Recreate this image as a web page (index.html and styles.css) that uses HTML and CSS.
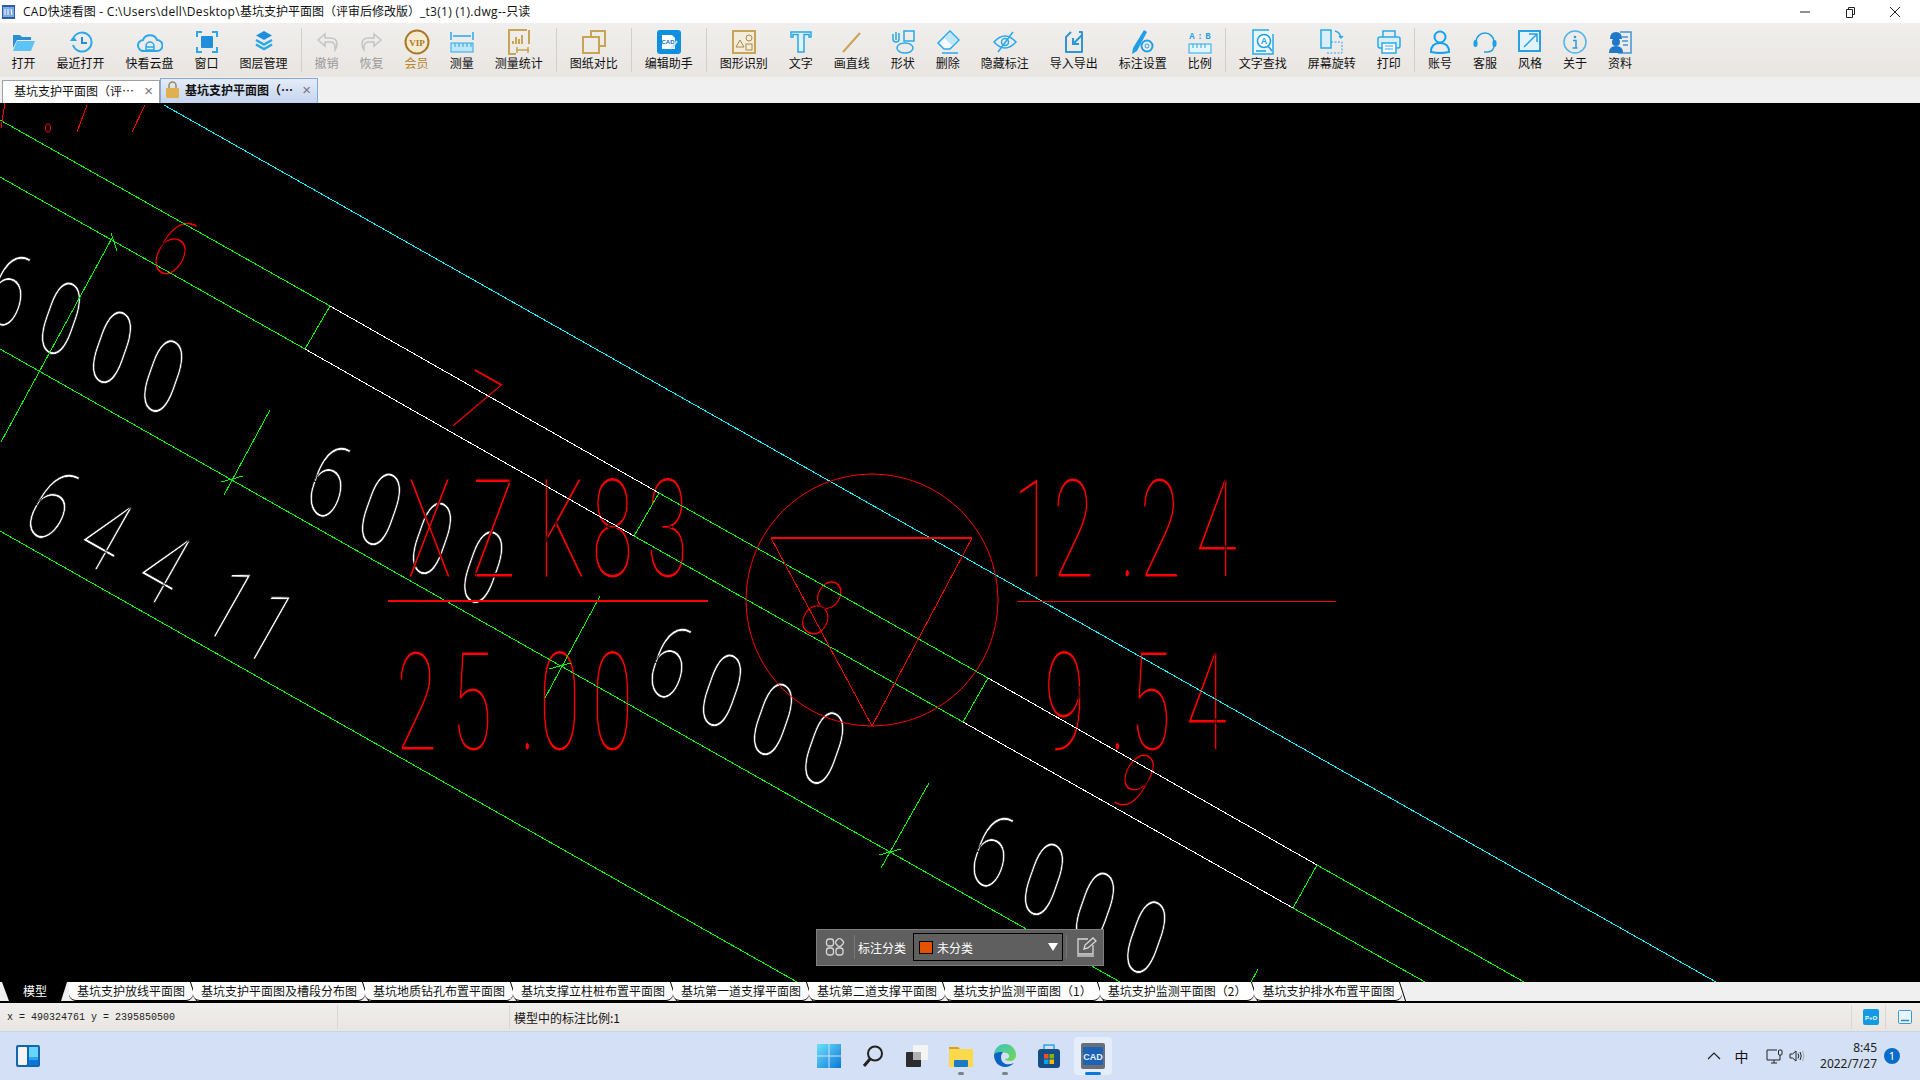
FILE: index.html
```html
<!DOCTYPE html>
<html lang="zh-CN">
<head>
<meta charset="utf-8">
<title>CAD快速看图</title>
<link rel="stylesheet" href="styles.css">
</head>
<body>
<div class="app">
  <header class="titlebar">
    <svg class="app-ico" width="13" height="14" viewBox="0 0 13 14"><rect width="13" height="14" fill="#2a5caa"/><rect x="1" y="2" width="11" height="10" fill="#7fa8dc"/><path d="M3 4v6M6 4v6M9 4l1 6" stroke="#fff" fill="none"/></svg>
    <span class="title-text"><span class="lat">CAD</span>快速看图<span class="lat"> - C:\Users\dell\Desktop\</span>基坑支护平面图（评审后修改版）<span class="lat">_t3(1) (1).dwg--</span>只读</span>
    <div class="winbtns">
      <svg width="12" height="12" viewBox="0 0 12 12"><path d="M1 6h10" stroke="#222"/></svg>
      <svg width="12" height="12" viewBox="0 0 12 12"><path d="M2.500 3.500h6v8h-6zM4.500 3.500V1.500h6v7h-2" stroke="#222" fill="none"/></svg>
      <svg width="12" height="12" viewBox="0 0 12 12"><path d="M1 1l10 10M11 1L1 11" stroke="#222" fill="none"/></svg>
    </div>
  </header>

  <nav class="toolbar">
    <div class="tool"><div class="ico"><svg width="24" height="22" viewBox="0 0 24 22"><path d="M1 4h7l2 2h9v3H5L1 17z" fill="#2b8fd8"/><path d="M5 10h18l-4 10H1z" fill="#5cc3f5"/></svg></div><span>打开</span></div>
    <div class="tool"><div class="ico"><svg width="24" height="24" viewBox="0 0 24 24"><path d="M5 7a9.500 9.500 0 1 1-1 8" fill="none" stroke="#29a9ea" stroke-width="2"/><path d="M1 11h7l-3.500-5z" fill="#29a9ea"/><path d="M13 7v6h5" fill="none" stroke="#1f8fd8" stroke-width="2"/></svg></div><span>最近打开</span></div>
    <div class="tool"><div class="ico"><svg width="26" height="22" viewBox="0 0 26 22"><path d="M7 20a5.500 5.500 0 0 1-1-11 7.500 7.500 0 0 1 14 0 5.500 5.500 0 0 1 0 11z" fill="none" stroke="#29a9ea" stroke-width="2"/><path d="M9 19v-4a4 4 0 0 1 8 0v4zM9 16h8" fill="none" stroke="#29a9ea" stroke-width="1.500"/></svg></div><span>快看云盘</span></div>
    <div class="tool"><div class="ico"><svg width="22" height="22" viewBox="0 0 22 22"><path d="M1 6V1h5M16 1h5v5M21 16v5h-5M6 21H1v-5" fill="none" stroke="#29a9ea" stroke-width="2"/><rect x="5" y="5" width="12" height="12" rx="1" fill="#1e8fdc"/></svg></div><span>窗口</span></div>
    <div class="tool"><div class="ico"><svg width="20" height="24" viewBox="0 0 20 24"><path d="M10 1l8 4.500-8 4.500-8-4.500z" fill="#1e8fdc"/><path d="M2 10l8 4.500 8-4.500M2 14.500l8 4.500 8-4.500" fill="none" stroke="#29a9ea" stroke-width="2.500"/></svg></div><span>图层管理</span></div>
    <i class="sep"></i>
    <div class="tool off"><div class="ico"><svg width="22" height="20" viewBox="0 0 22 20"><path d="M9 2L2 8l7 6v-4h5q5 0 5 5v3q2-3 2-6 0-6-7-6H9z" fill="none" stroke="#c4c4c4" stroke-width="1.500"/></svg></div><span>撤销</span></div>
    <div class="tool off"><div class="ico"><svg width="22" height="20" viewBox="0 0 22 20"><path d="M13 2l7 6-7 6v-4H8q-5 0-5 5v3q-2-3-2-6 0-6 7-6h5z" fill="none" stroke="#c4c4c4" stroke-width="1.500"/></svg></div><span>恢复</span></div>
    <div class="tool gold"><div class="ico"><svg width="26" height="26" viewBox="0 0 26 26"><circle cx="13" cy="13" r="11.500" fill="#f6ead0" stroke="#a9792a" stroke-width="2"/><text x="13" y="17" class="vip">VIP</text></svg></div><span>会员</span></div>
    <div class="tool"><div class="ico"><svg width="24" height="22" viewBox="0 0 24 22"><path d="M1 1v8M23 1v8M3 5h18" fill="none" stroke="#29a9ea" stroke-width="1.500"/><rect x="1" y="12" width="22" height="9" fill="#bfe6fa" stroke="#29a9ea"/><path d="M5 12v4M9 12v4M13 12v4M17 12v4M21 12v4" stroke="#29a9ea"/></svg></div><span>测量</span></div>
    <div class="tool"><div class="ico"><svg width="24" height="26" viewBox="0 0 24 26"><path d="M20 1H2v24h7M22 1v14" fill="none" stroke="#c8a555" stroke-width="2"/><path d="M6 15v-3M9 15V8M12 15v-5M15 15V6" stroke="#c8a555" stroke-width="2"/><path d="M9 21h13M10 18v6M21 18v6" stroke="#c8a555" stroke-width="1.500"/></svg></div><span>测量统计</span></div>
    <i class="sep"></i>
    <div class="tool"><div class="ico"><svg width="24" height="24" viewBox="0 0 24 24"><path d="M9 7V1h14v15h-6M1 7h16v16H1z" fill="none" stroke="#c8a555" stroke-width="2"/></svg></div><span>图纸对比</span></div>
    <i class="sep"></i>
    <div class="tool"><div class="ico"><svg width="24" height="24" viewBox="0 0 24 24"><rect width="24" height="24" rx="3" fill="#0e8fe0"/><path d="M5 5h10l3 3v11H5z" fill="#fff"/><text x="11" y="14" class="cadmini">CAD</text><path d="M14 19l6-8" stroke="#bfe6fa" stroke-width="2"/></svg></div><span>编辑助手</span></div>
    <i class="sep"></i>
    <div class="tool"><div class="ico"><svg width="24" height="24" viewBox="0 0 24 24"><rect x="1" y="1" width="22" height="22" fill="#f3ecdc" stroke="#c8a555" stroke-width="2"/><path d="M4 17l4-7 4 7z" fill="none" stroke="#a98a45"/><circle cx="17" cy="8" r="3" fill="none" stroke="#a98a45"/><rect x="14" y="14" width="6" height="6" fill="none" stroke="#a98a45"/></svg></div><span>图形识别</span></div>
    <div class="tool"><div class="ico"><svg width="22" height="22" viewBox="0 0 22 22"><path d="M1 1h20v5h-2V3.500h-5V21H8V3.500H3V6H1z" fill="#dff3fc" stroke="#29a9ea" stroke-width="1.500"/></svg></div><span>文字</span></div>
    <div class="tool"><div class="ico"><svg width="20" height="22" viewBox="0 0 20 22"><path d="M1 21L18 2" stroke="#c8a555" stroke-width="2"/></svg></div><span>画直线</span></div>
    <div class="tool"><div class="ico"><svg width="24" height="24" viewBox="0 0 24 24"><rect x="13" y="1" width="10" height="10" fill="none" stroke="#29a9ea" stroke-width="1.500"/><ellipse cx="14" cy="18" rx="8" ry="5" fill="none" stroke="#29a9ea" stroke-width="1.500"/><path d="M5 2v8M2 4v5q0 3 3 3 3 0 3-3V3" fill="none" stroke="#29a9ea" stroke-width="1.500"/></svg></div><span>形状</span></div>
    <div class="tool"><div class="ico"><svg width="24" height="24" viewBox="0 0 24 24"><path d="M14 1l9 9-9 9H8l-6-6z" fill="#f6fbfe" stroke="#29a9ea" stroke-width="1.500"/><path d="M14 2.500l7.500 7.500-5.500 5.500L8.500 8z" fill="#bfe6fa"/><path d="M6 23h16" stroke="#29a9ea" stroke-width="1.500"/></svg></div><span>删除</span></div>
    <div class="tool"><div class="ico"><svg width="24" height="22" viewBox="0 0 24 22"><path d="M1 11q11-12 22 0-11 12-22 0z" fill="none" stroke="#29a9ea" stroke-width="1.500"/><circle cx="12" cy="11" r="3.500" fill="none" stroke="#29a9ea" stroke-width="1.500"/><path d="M5 21L20 1" stroke="#29a9ea" stroke-width="1.500"/></svg></div><span>隐藏标注</span></div>
    <div class="tool"><div class="ico"><svg width="20" height="24" viewBox="0 0 20 24"><path d="M7 2L2 7v15h16V2h-3" fill="none" stroke="#2f96d6" stroke-width="2" stroke-linejoin="round"/><path d="M9 14L18 5M9 8v6h6" fill="none" stroke="#2f96d6" stroke-width="2"/></svg></div><span>导入导出</span></div>
    <div class="tool"><div class="ico"><svg width="24" height="26" viewBox="0 0 24 26"><path d="M13 1l3 2-10 19-5 3 1-6z" fill="#1f9fe6"/><circle cx="16" cy="17" r="5.500" fill="#f0eeec" stroke="#1f9fe6" stroke-width="2"/><circle cx="16" cy="17" r="2" fill="none" stroke="#1f9fe6"/></svg></div><span>标注设置</span></div>
    <div class="tool"><div class="ico"><svg width="24" height="24" viewBox="0 0 24 24"><text class="ab" x="4 12 20" y="9">A:B</text><rect x="1" y="14" width="22" height="9" fill="#e3f5fd" stroke="#29a9ea"/><path d="M5 14v4M9 14v4M13 14v4M17 14v4" stroke="#29a9ea"/></svg></div><span>比例</span></div>
    <i class="sep"></i>
    <div class="tool"><div class="ico"><svg width="24" height="26" viewBox="0 0 24 26"><path d="M18 1H2v24h20V5" fill="#e8f6fd" stroke="#29a9ea" stroke-width="1.500"/><circle cx="13" cy="12" r="6.500" fill="#fff" stroke="#1f9fe6" stroke-width="1.500"/><text x="13" y="15" class="qa">A</text><path d="M17 17l4 5M5 22h10" stroke="#1f9fe6" stroke-width="1.500"/></svg></div><span>文字查找</span></div>
    <div class="tool"><div class="ico"><svg width="24" height="26" viewBox="0 0 24 26"><rect x="1" y="1" width="10" height="18" fill="#d8f0fb" stroke="#29a9ea" stroke-width="1.500"/><path d="M7 24h15V13H11" fill="none" stroke="#29a9ea" stroke-dasharray="2 1.500"/><path d="M15 2q5 1 6 7M19 7l2 2 2-2" fill="none" stroke="#29a9ea" stroke-width="1.500"/></svg></div><span>屏幕旋转</span></div>
    <div class="tool"><div class="ico"><svg width="24" height="24" viewBox="0 0 24 24"><path d="M6 7V1h12v6" fill="none" stroke="#29a9ea" stroke-width="1.500"/><rect x="1" y="7" width="22" height="11" rx="2" fill="#d8f0fb" stroke="#29a9ea" stroke-width="1.500"/><rect x="5" y="13" width="14" height="10" fill="#fff" stroke="#29a9ea" stroke-width="1.500"/><path d="M8 16h8M8 19h8" stroke="#29a9ea"/></svg></div><span>打印</span></div>
    <i class="sep"></i>
    <div class="tool"><div class="ico"><svg width="22" height="24" viewBox="0 0 22 24"><circle cx="11" cy="7" r="5.500" fill="none" stroke="#12a0f0" stroke-width="2"/><path d="M2 22q0-9 9-9t9 9q-9 2-18 0z" fill="none" stroke="#12a0f0" stroke-width="2"/></svg></div><span>账号</span></div>
    <div class="tool"><div class="ico"><svg width="24" height="24" viewBox="0 0 24 24"><path d="M3 12a9 9 0 0 1 18 0M21 15q0 7-7 7h-3" fill="none" stroke="#1f9fe6" stroke-width="1.500"/><rect x="0.500" y="10" width="4" height="7" rx="2" fill="#1f9fe6"/><rect x="19.500" y="10" width="4" height="7" rx="2" fill="#1f9fe6"/></svg></div><span>客服</span></div>
    <div class="tool"><div class="ico"><svg width="24" height="24" viewBox="0 0 24 24"><path d="M22 1H1v20h21z" fill="#e3f3fb" stroke="#29a0e0" stroke-width="2"/><path d="M6 17L19 4M11 4h8v8" fill="none" stroke="#29a0e0" stroke-width="1.500"/></svg></div><span>风格</span></div>
    <div class="tool"><div class="ico"><svg width="24" height="24" viewBox="0 0 24 24"><circle cx="12" cy="12" r="11" fill="none" stroke="#4fb5e8" stroke-width="1.500"/><circle cx="12" cy="7" r="1.300" fill="#2a9ddc"/><path d="M10 10.500h3v7M9.500 18h5" fill="none" stroke="#2a9ddc" stroke-width="1.500"/></svg></div><span>关于</span></div>
    <div class="tool"><div class="ico"><svg width="24" height="24" viewBox="0 0 24 24"><path d="M12 2h11v21H10" fill="none" stroke="#3f95d8" stroke-width="1.500"/><path d="M14 7h6M14 11h6M15 15h5" stroke="#3f95d8" stroke-width="1.500"/><path d="M2 9q0-7 6-7t6 7z" fill="#1f78c8"/><circle cx="8" cy="12" r="4" fill="#1f78c8"/><path d="M1 23q0-7 7-7t7 7z" fill="#1f78c8"/></svg></div><span>资料</span></div>
  </nav>

  <div class="doctabs">
    <div class="doctab"><span class="doctab-text">基坑支护平面图（评⋯</span><span class="doctab-x">×</span></div>
    <div class="doctab active">
      <svg width="13" height="17" viewBox="0 0 13 17"><path d="M3 8V4.500a3.500 3.500 0 0 1 7 0V8" fill="none" stroke="#9a8a60" stroke-width="1.500"/><rect y="7" width="13" height="10" rx="1" fill="#e0b050"/></svg>
      <span class="doctab-text">基坑支护平面图（⋯</span><span class="doctab-x">×</span>
    </div>
  </div>

  <main class="canvas">
    <svg class="drawing" width="1920" height="879" viewBox="0 103 1920 879">
      <g class="cad tw">
        <text transform="translate(-19,314) rotate(29.500) skewX(10) scale(.7,1)" x="0 84 168 252">6000</text>
        <text transform="translate(301,505) rotate(29.500) skewX(10) scale(.7,1)" x="0 84 168 252">6000</text>
        <text transform="translate(642,686) rotate(29.500) skewX(10) scale(.7,1)" x="0 84 168 252">6000</text>
        <text transform="translate(964,875) rotate(29.500) skewX(10) scale(.7,1)" x="0 84 168 252">6000</text>
        <text transform="translate(19,526) rotate(29.500) scale(.7,1)" x="0 86 182 290 355">64411</text>
      </g>
      <g class="cad tr big">
        <text transform="translate(0,577) scale(.55,1)" x="740 856 978 1076 1176">XZK83</text>
        <text transform="translate(0,750) scale(.55,1)" x="720 820 945 980 1076">25.00</text>
        <text transform="translate(0,577) scale(.55,1)" x="1842 1914 2036 2072 2174">12.24</text>
        <text transform="translate(0,750) scale(.55,1)" x="1898 2018 2054 2156">9.54</text>
      </g>
      <g class="cad tr">
        <text transform="translate(146,264) rotate(29.500) scale(.62,.82)">6</text>
        <text transform="translate(443,420) rotate(29.500) scale(.7,.85)">7</text>
        <text transform="translate(795,625) rotate(29.500) scale(.55,.8)">8</text>
        <text transform="translate(1107,798) rotate(29.500) scale(.58,.8)">9</text>
      </g>
      <g class="l cyan"><line x1="164" y1="105" x2="1716" y2="982"/></g>
      <g class="l green">
        <line x1="0" y1="120" x2="330" y2="306"/><line x1="659" y1="493" x2="988" y2="678"/><line x1="1317" y1="865" x2="1524" y2="982"/>
        <line x1="0" y1="177" x2="305" y2="349"/><line x1="634" y1="536" x2="963" y2="722"/><line x1="1293" y1="908" x2="1425" y2="982"/>
        <line x1="0" y1="349" x2="1120" y2="982"/>
        <line x1="0" y1="531" x2="797" y2="982"/>
        <line x1="330" y1="306" x2="305" y2="349"/><line x1="659" y1="493" x2="634" y2="536"/><line x1="988" y1="678" x2="963" y2="722"/><line x1="1317" y1="865" x2="1293" y2="908"/>
        <line x1="112" y1="238" x2="1" y2="442"/><line x1="111" y1="233" x2="117" y2="251"/>
        <line x1="270" y1="410" x2="224" y2="495"/><line x1="221" y1="482" x2="243" y2="476"/>
        <line x1="600" y1="596" x2="545" y2="698"/><line x1="549" y1="669" x2="571" y2="663"/>
        <line x1="929" y1="783" x2="881" y2="868"/><line x1="879" y1="855" x2="901" y2="849"/>
        <line x1="1258" y1="969" x2="1251" y2="982"/>
      </g>
      <g class="l white">
        <line x1="330" y1="306" x2="659" y2="493"/><line x1="305" y1="349" x2="634" y2="536"/>
        <line x1="988" y1="678" x2="1317" y2="865"/><line x1="963" y1="722" x2="1293" y2="908"/>
      </g>
      <g class="l red">
        <line x1="5" y1="103" x2="1" y2="128"/><line x1="87" y1="105" x2="77" y2="132"/><line x1="145" y1="105" x2="132" y2="132"/><ellipse cx="48" cy="128" rx="2.500" ry="4"/>
        <circle cx="872" cy="600" r="126"/>
        <path d="M771 538L872 726L972 538"/>
        <line class="thick" x1="771" y1="538" x2="972" y2="538"/>
        <line class="thick" x1="388" y1="601" x2="708" y2="601"/>
        <line x1="1017" y1="601" x2="1336" y2="601"/>
      </g>
    </svg>

    <div class="annot">
      <svg width="20" height="20" viewBox="0 0 20 20"><rect x="1.500" y="2" width="7" height="7" rx="2.500" class="pi"/><rect x="11" y="2" width="7" height="7" rx="2.500" transform="rotate(45 14.500 5.500)" class="pi"/><rect x="1.500" y="11" width="7" height="7" rx="2.500" class="pi"/><rect x="11" y="11" width="7" height="7" rx="2.500" class="pi"/></svg>
      <i class="annot-sep"></i>
      <span class="annot-label">标注分类</span>
      <div class="annot-select"><i class="swatch"></i><span>未分类</span><i class="caret"></i></div>
      <i class="annot-sep"></i>
      <svg class="annot-edit" width="22" height="22" viewBox="0 0 22 22"><path d="M13 3H3v15h15V9" class="pi"/><path d="M2 20h17" class="pi"/><path d="M9 13l1-4 8-7 3 3-8 7z" class="pi"/></svg>
    </div>
  </main>

  <div class="sheets">
    <div class="sheet model">模型</div>
    <div class="sheet first">基坑支护放线平面图</div>
    <div class="sheet">基坑支护平面图及槽段分布图</div>
    <div class="sheet">基坑地质钻孔布置平面图</div>
    <div class="sheet">基坑支撑立柱桩布置平面图</div>
    <div class="sheet">基坑第一道支撑平面图</div>
    <div class="sheet">基坑第二道支撑平面图</div>
    <div class="sheet">基坑支护监测平面图（1）</div>
    <div class="sheet">基坑支护监测平面图（2）</div>
    <div class="sheet">基坑支护排水布置平面图</div>
  </div>

  <div class="status">
    <div class="st st-coord">x = 490324761 y = 2395850500</div>
    <div class="st st-mid"></div>
    <div class="st st-scale">模型中的标注比例:1</div>
    <div class="st st-icon"><svg width="16" height="16" viewBox="0 0 16 16"><rect width="16" height="16" rx="2" fill="#129ae4"/><text x="8" y="11" class="po">P+O</text></svg></div>
    <div class="st st-icon last"><svg width="14" height="14" viewBox="0 0 14 14"><rect x=".5" y=".5" width="13" height="13" rx="1" fill="#e8f3fa" stroke="#3a9ad8"/><path d="M3 10.500h8" stroke="#2a8ad0" stroke-width="1.500"/></svg></div>
  </div>

  <footer class="taskbar">
    <div class="tb-left">
      <svg width="24" height="22" viewBox="0 0 24 22"><rect width="24" height="22" rx="2" fill="#1566ae"/><rect x="2" y="2" width="9" height="18" rx="1" fill="#f4f4f4"/><rect x="13" y="2" width="9" height="10" fill="#66d4fb"/><rect x="13" y="12" width="9" height="3" fill="#2aa4ee"/><rect x="13" y="15" width="9" height="5" fill="#0a78d8"/></svg>
    </div>
    <div class="tb-center">
      <div class="tb-app"><svg width="24" height="24" viewBox="0 0 24 24"><defs><linearGradient id="g1" x1="0" y1="0" x2="1" y2="1"><stop offset="0" stop-color="#6ee0fa"/><stop offset="1" stop-color="#0a78d8"/></linearGradient></defs><path d="M0 0h11.500v11.500H0zM12.500 0H24v11.500H12.500zM0 12.500h11.500V24H0zM12.500 12.500H24V24H12.500z" fill="url(#g1)"/></svg></div>
      <div class="tb-app"><svg width="24" height="24" viewBox="0 0 24 24"><circle cx="14" cy="9.500" r="7" fill="none" stroke="#222" stroke-width="2"/><path d="M9 15l-6 7" stroke="#222" stroke-width="3"/></svg></div>
      <div class="tb-app"><svg width="24" height="24" viewBox="0 0 24 24"><rect x="8" y="1" width="15" height="15" rx="1" fill="#f4f4f4"/><rect x="1" y="8" width="15" height="15" rx="1" fill="#2c2c2c"/><rect x="8" y="8" width="8" height="8" fill="#b0b0b0"/></svg></div>
      <div class="tb-app run"><svg width="24" height="22" viewBox="0 0 24 22"><path d="M0 2h9l2 2v3H0z" fill="#d9a21b"/><rect y="4" width="24" height="18" rx="1" fill="#fcd84c"/><rect x="5" y="15" width="14" height="7" rx="1" fill="#1a7ac4"/></svg></div>
      <div class="tb-app run"><svg width="24" height="24" viewBox="0 0 24 24"><defs><linearGradient id="g2" x1="0" y1="0" x2="1" y2="1"><stop offset="0" stop-color="#38c3c8"/><stop offset="1" stop-color="#74d94e"/></linearGradient></defs><path d="M1 11a11 11 0 0 1 22 0c0 4-3 6-6 6-3 0-5-1-5-2 3 0 5-2 4-4-2-4-10-3-12 1z" fill="url(#g2)"/><path d="M1 11c0 7 5 12 11 12 4 0 7-2 9-4-6 3-13 1-13-6 0-2 1-4 2-5-4 0-8 0-9 3z" fill="#0b62c4"/></svg></div>
      <div class="tb-app"><svg width="24" height="26" viewBox="0 0 24 26"><path d="M7 6V2h10v4" fill="none" stroke="#2aa4ee" stroke-width="1.500"/><rect x="1" y="6" width="22" height="19" rx="3" fill="#174d86"/><rect x="7" y="11" width="4.500" height="4.500" fill="#f25022"/><rect x="12.500" y="11" width="4.500" height="4.500" fill="#7fba00"/><rect x="7" y="16.500" width="4.500" height="4.500" fill="#00a4ef"/><rect x="12.500" y="16.500" width="4.500" height="4.500" fill="#ffb900"/></svg></div>
      <div class="tb-app active"><svg width="24" height="26" viewBox="0 0 24 26"><rect width="24" height="26" rx="2" fill="#6b6f75"/><rect x="2" y="4" width="20" height="18" fill="#1c62b8"/><text x="12" y="17" class="cadtb">CAD</text></svg></div>
    </div>
    <div class="tb-right">
      <svg class="t-chev" width="14" height="8" viewBox="0 0 14 8"><path d="M1 7l6-6 6 6" fill="none" stroke="#222" stroke-width="1.200"/></svg>
      <span class="t-ime">中</span>
      <svg class="t-net" width="17" height="15" viewBox="0 0 17 15"><path d="M11 1H1v10h13V6M5 14h6M8 11v3" fill="none" stroke="#222"/><rect x="12.500" y="1" width="3.500" height="5" rx="1" fill="none" stroke="#222"/></svg>
      <svg class="t-vol" width="16" height="12" viewBox="0 0 16 12"><path d="M1 4h2.500L7 1v10L3.500 8H1zM9 3.500q1.500 2.500 0 5M11 2q2.500 4 0 8" fill="none" stroke="#222"/><path d="M13.500 1q3 5 0 10" fill="none" stroke="#aaa"/></svg>
      <div class="clock"><span>8:45</span><span>2022/7/27</span></div>
      <span class="badge">1</span>
    </div>
  </footer>
</div>
</body>
</html>
```
FILE: styles.css
```css
* { box-sizing: border-box; }
html, body { margin: 0; padding: 0; }
body { font-family: "Noto Sans CJK SC", "Noto Sans", sans-serif; font-size: 12px; color: #111; overflow: hidden; text-spacing-trim: space-all; }
.app { width: 1920px; height: 1080px; display: flex; flex-direction: column; }

.titlebar { height: 23px; background: #fff; display: flex; align-items: center; padding-left: 2px; }
.app-ico { margin-right: 8px; }
.title-text { font-family: "Open Sans", "Noto Sans CJK SC", sans-serif; font-size: 12px; line-height: 16px; white-space: nowrap; }
.lat { letter-spacing: .3px; }
.winbtns { margin-left: auto; display: flex; gap: 33px; padding-right: 19px; }

.toolbar { height: 54px; padding-left: 1px; display: flex; align-items: stretch; background: linear-gradient(#f0efed, #e9e5e1); }
.tool { padding: 6px 10.5px 0; display: flex; flex-direction: column; align-items: center; white-space: nowrap; }
.ico { width: 24px; height: 26px; display: flex; justify-content: center; align-items: center; }
.ico svg { flex-shrink: 0; }
.tool span { font-size: 12px; line-height: 14px; margin-top: 1px; }
.tool.off span { color: #9a9a9a; }
.tool.gold span { color: #b8862b; }
.sep { width: 1px; margin: 5px 2.5px; background: #d2cfcb; }
.vip { font: bold 9px "Liberation Serif", serif; fill: #a9792a; text-anchor: middle; }
.cadmini { font: bold 6px "Liberation Sans", sans-serif; fill: #0e6fc0; text-anchor: middle; }
.ab { font: bold 9px "Liberation Mono", monospace; fill: #1f9fe6; text-anchor: middle; }
.qa { font: bold 9px "Liberation Sans", sans-serif; fill: #1f9fe6; text-anchor: middle; }
.po { font: bold 6px "Liberation Sans", sans-serif; fill: #fff; text-anchor: middle; }
.cadtb { font: bold 9px "Liberation Sans", sans-serif; fill: #e8f0fa; text-anchor: middle; }

.doctabs { height: 26px; background: #f0f0f0; display: flex; align-items: flex-end; padding-left: 2px; }
.doctab { width: 158px; height: 23px; background: #fff; border: 1px solid #a0a0a0; border-bottom: 0; display: flex; align-items: center; padding: 0 0 3px 11px; }
.doctab-text { white-space: nowrap; }
.doctab-x { margin-left: auto; padding-right: 6px; font: 15px "Liberation Sans", sans-serif; color: #777; }
.doctab.active { height: 25px; padding-left: 5px; gap: 6px; border-color: #86a8d4; background: linear-gradient(#e4ecf8, #c4d5ee); }
.doctab.active .doctab-text { font-weight: 700; }

.canvas { height: 879px; background: #000; position: relative; overflow: hidden; }
.drawing { display: block; }
.l line, .l path, .l circle, .l ellipse { fill: none; stroke-width: 1; shape-rendering: crispEdges; }
.l circle, .l ellipse { shape-rendering: auto; }
.cyan line { stroke: #00ffff; }
.green line { stroke: #00ff00; }
.white line { stroke: #fff; }
.red line, .red path, .red circle, .red ellipse { stroke: #f00; }
.red .thick { stroke-width: 2; }
.cad text { font-family: Roboto, sans-serif; font-weight: 100; font-size: 100px; stroke: #000; stroke-width: .7px; }
.tw text { fill: #fff; }
.tr text { fill: #f00; }
.big text { font-size: 137px; stroke-width: 1.100px; }

.annot { position: absolute; left: 816px; top: 826px; width: 288px; height: 37px; padding: 0 0 1px 8px; background: #5f5f5f; border: 1px solid #808080; display: flex; align-items: center; color: #fff; }
.annot-sep { width: 1px; height: 24px; background: #777; }
.annot > svg:first-child { margin-right: 9px; }
.annot-label { margin: 0 7px 0 3px; white-space: nowrap; }
.annot-select { width: 150px; height: 28px; border: 1px solid #000; display: flex; align-items: center; padding-left: 5px; margin-right: 3px; }
.swatch { width: 14px; height: 13px; background: #e65100; border: 1px solid #000; margin-right: 4px; }
.caret { margin-left: auto; margin-right: 4px; width: 0; height: 0; border-left: 5px solid transparent; border-right: 5px solid transparent; border-top: 8px solid #fff; }
.annot-edit { margin-left: 8px; }
.pi { fill: none; stroke: #d8d8d8; stroke-width: 1.300; }

.sheets { height: 21px; display: flex; background: #f0f0f0; border-bottom: 2px solid #000; flex-shrink: 0; }
.sheet { position: relative; padding: 0 8px; background: #fff; border-bottom: 1px solid #000; border-radius: 0 0 7px 7px; line-height: 17px; white-space: nowrap; color: #111; }
.sheet::after { content: ""; position: absolute; right: -1px; top: 0; width: 1px; height: 19px; background: #000; transform: skewX(18deg); }
.sheet.first { margin-left: 2px; }
.sheet.model { width: 67px; padding: 0 0 0 23px; background: #000; color: #fff; border: 0; border-radius: 0; clip-path: polygon(2px 0, 67px 0, 61px 100%, 9px 100%); }
.sheet.model::after { display: none; }

.status { height: 29px; display: flex; align-items: center; background: linear-gradient(#f0efed, #e9e5e1); border-bottom: 1px solid #c9d3e6; }
.st { height: 24px; display: flex; align-items: center; border-right: 1px solid #dbd8d4; white-space: nowrap; }
.st-coord { width: 338px; padding-left: 7px; font: 10px "Liberation Mono", monospace; color: #222; }
.st-mid { width: 172px; }
.st-scale { flex: 1; padding-left: 4px; }
.st-icon { width: 34px; padding-left: 4px; justify-content: center; }
.st-icon.last { border-right: 0; }

.taskbar { height: 48px; background: #d4e0f6; display: grid; grid-template-columns: 1fr auto 1fr; align-items: center; }
.tb-left { padding-left: 16px; display: flex; align-items: center; }
.tb-center { display: flex; height: 48px; align-items: center; gap: 6px; margin-left: 2px; }
.tb-app { position: relative; width: 38px; height: 38px; display: flex; align-items: center; justify-content: center; border-radius: 4px; }
.tb-app.active { background: #e6edfa; }
.tb-app.active::after { content: ""; position: absolute; bottom: 0; left: 11px; width: 16px; height: 3px; border-radius: 2px; background: #0a78d8; }
.tb-app.run::after { content: ""; position: absolute; bottom: 0; left: 16px; width: 6px; height: 3px; border-radius: 2px; background: #7d8288; }
.tb-right { display: flex; align-items: center; justify-content: flex-end; padding-right: 20px; }
.t-chev { margin-right: 13.5px; }
.t-ime { font-size: 14px; margin-right: 17px; }
.t-net { margin-right: 6px; }
.t-vol { margin-right: 15.5px; }
.clock { display: flex; flex-direction: column; align-items: flex-end; font: 12px/16px "Noto Sans", sans-serif; color: #222; margin-right: 7px; }
.badge { width: 16px; height: 16px; border-radius: 50%; background: #0a6cc9; color: #fff; font: 11px/16px "Noto Sans", sans-serif; text-align: center; }
```
